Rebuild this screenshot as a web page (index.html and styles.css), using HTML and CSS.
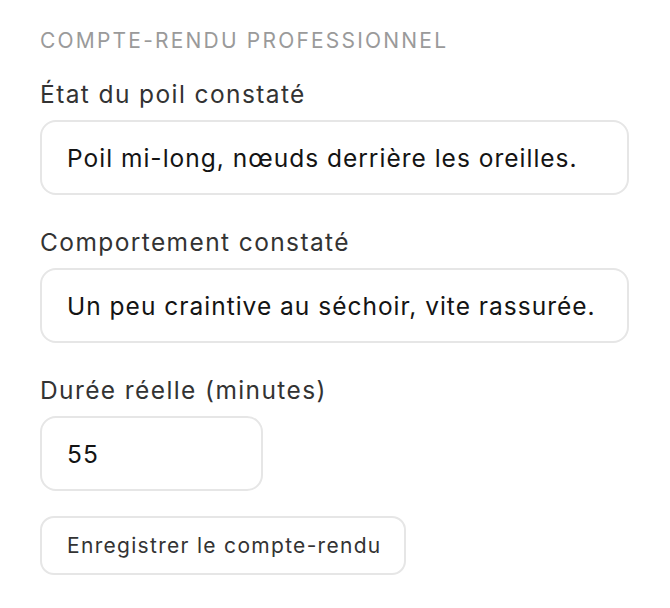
FILE: index.html
```html
<!DOCTYPE html>
<html lang="fr">
<head>
<meta charset="utf-8">
<link rel="stylesheet" href="styles.css">
</head>
<body>
<form class="report">
  <h2 class="report-title">Compte-rendu professionnel</h2>
  <div class="field">
    <label class="field-label">État du poil constaté</label>
    <div class="input">Poil mi-long, nœuds derrière les oreilles.</div>
  </div>
  <div class="field">
    <label class="field-label">Comportement constaté</label>
    <div class="input">Un peu craintive au séchoir, vite rassurée.</div>
  </div>
  <div class="field field-last">
    <label class="field-label">Durée réelle (minutes)</label>
    <div class="input input-short">55</div>
  </div>
  <button type="button" class="btn">Enregistrer le compte-rendu</button>
</form>
</body>
</html>
```
FILE: styles.css
```css
html, body { margin: 0; padding: 0; background: #fff; }
body { font-family: Inter, "Noto Sans", sans-serif; }
.report {
  width: 589px;
  padding: 27px 0 0 40px;
  display: flex;
  flex-direction: column;
  align-items: flex-start;
}
.report-title {
  margin: 0 0 25px;
  font-size: 21px;
  font-weight: 400;
  text-transform: uppercase;
  letter-spacing: 2.2px;
  color: #9a9a9a;
  line-height: 28px;
  white-space: nowrap;
}
.field {
  display: flex;
  flex-direction: column;
  gap: 12px;
  margin-bottom: 33px;
  width: 100%;
}
.field-last { margin-bottom: 25px; }
.field-label {
  font-size: 24.5px;
  letter-spacing: 1.4px;
  color: #333;
  line-height: 28px;
  white-space: nowrap;
}
.input {
  box-sizing: border-box;
  height: 75px;
  border: 2px solid #e6e6e6;
  border-radius: 16px;
  padding: 0 25px;
  display: flex;
  align-items: center;
  font-size: 24.5px;
  letter-spacing: 1px;
  color: #141414;
  white-space: nowrap;
}
.input-short { width: 223px; }
.btn {
  box-sizing: border-box;
  height: 59px;
  width: 366px;
  border: 2px solid #e6e6e6;
  border-radius: 14px;
  background: #fff;
  font-family: inherit;
  font-size: 21px;
  letter-spacing: 1.3px;
  color: #333;
  padding: 0 0 0 25px;
  text-align: left;
}
```
